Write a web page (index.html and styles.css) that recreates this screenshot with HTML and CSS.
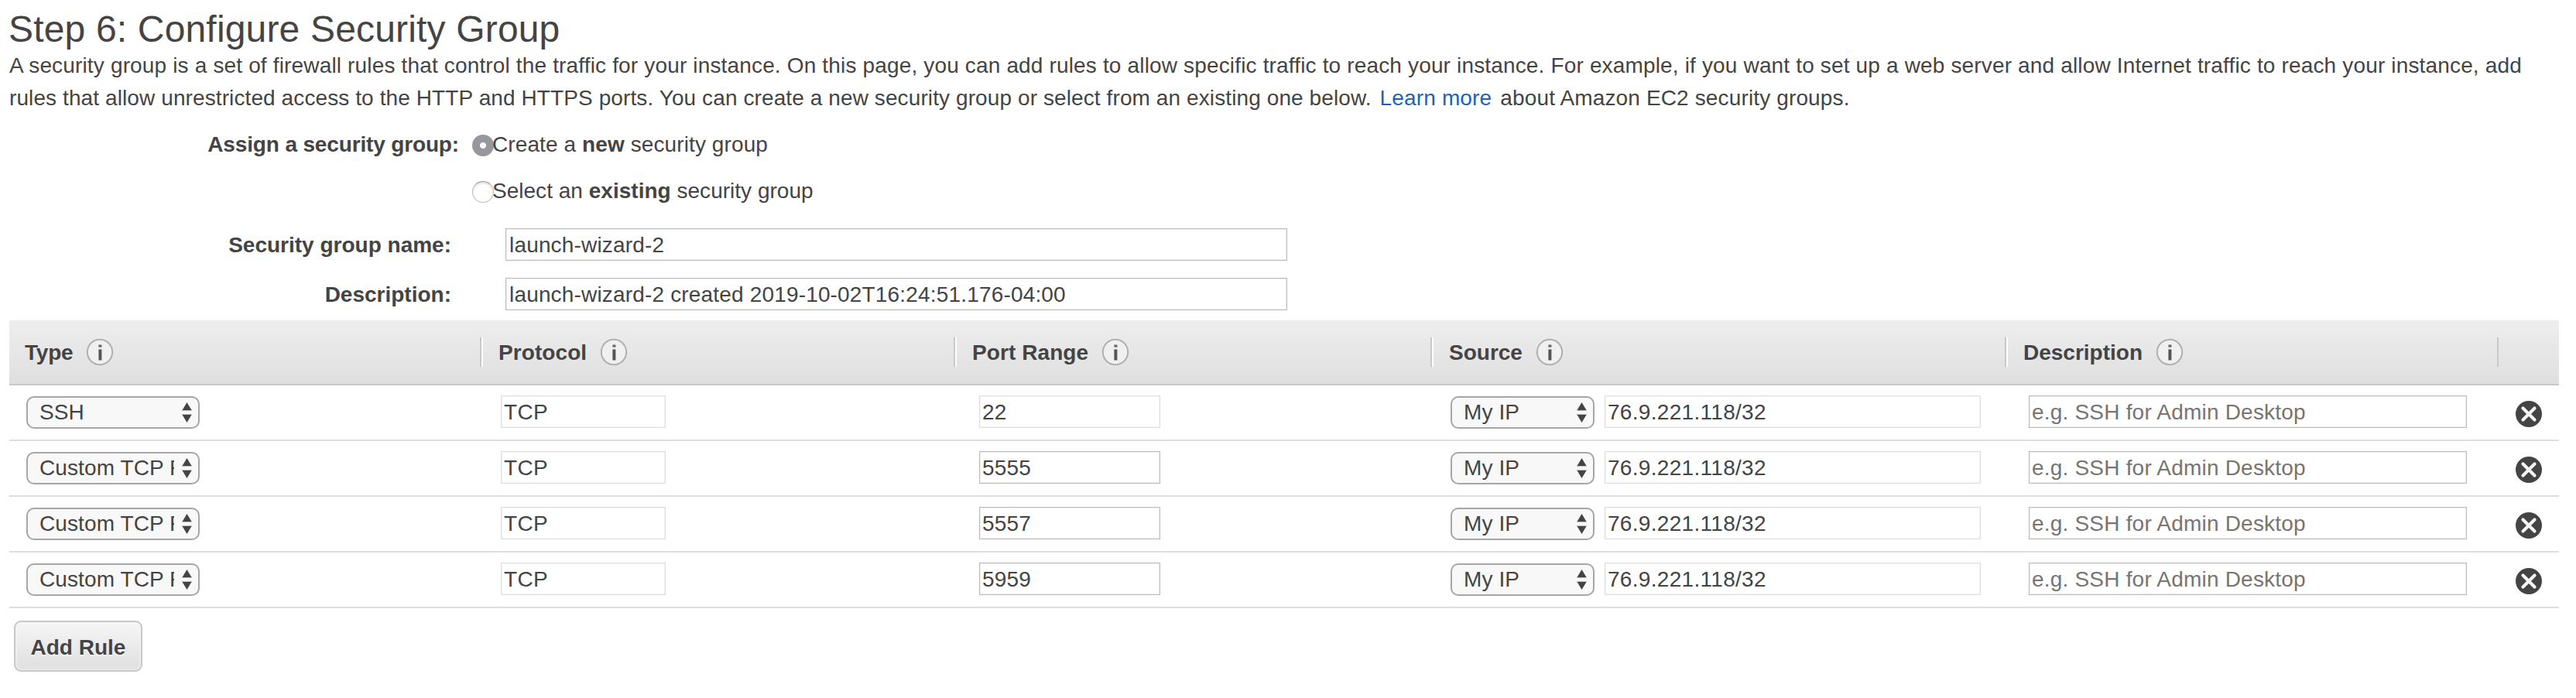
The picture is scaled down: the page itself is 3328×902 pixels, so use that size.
FILE: index.html
```html
<!DOCTYPE html>
<html lang="en">
<head>
<meta charset="utf-8">
<title>Step 6: Configure Security Group</title>
<link rel="stylesheet" href="styles.css">
</head>
<body>
<svg class="defs" width="0" height="0">
  <symbol id="info" viewBox="0 0 36 36">
    <circle cx="18" cy="18" r="16.2" fill="#f0f0f0" stroke="#b0b0b0" stroke-width="2"/>
    <rect x="16.4" y="8.5" width="4" height="3.2" fill="#666"/>
    <rect x="16.4" y="14.5" width="4" height="14" fill="#555"/>
  </symbol>
  <symbol id="remove" viewBox="0 0 36 36">
    <circle cx="18" cy="18" r="17" fill="#444"/>
    <path d="M10.5 10.5 25.5 25.5M25.5 10.5 10.5 25.5" stroke="#f4f4f4" stroke-width="4.2" stroke-linecap="round"/>
  </symbol>
  <symbol id="arrows" viewBox="0 0 13 26">
    <path d="M6.5 0 12.5 10H.5ZM.5 16h12L6.5 26Z" fill="#444"/>
    <path d="M0 10.5h13M0 15.5h13" stroke="#bbb"/>
  </symbol>
</svg>
<main class="page">
  <h1 class="title">Step 6: Configure Security Group</h1>
  <p class="intro">A security group is a set of firewall rules that control the traffic for your instance. On this page, you can add rules to allow specific traffic to reach your instance. For example, if you want to set up a web server and allow Internet traffic to reach your instance, add<br><span class="intro-second">rules that allow unrestricted access to the HTTP and HTTPS ports. You can create a new security group or select from an existing one below.</span><a class="learn">Learn more</a><span class="about">about Amazon EC2 security groups.</span></p>

  <section class="form">
    <div class="line choice">
      <div class="label assign">Assign a security group:</div>
      <span class="radio checked"></span><span class="option">Create a <b>new</b> security group</span>
    </div>
    <div class="line choice">
      <div class="label"></div>
      <span class="radio"></span><span class="option existing">Select an <b>existing</b> security group</span>
    </div>
    <div class="line field">
      <label class="label" for="name">Security group name:</label>
      <input class="input wide" id="name" value="launch-wizard-2">
    </div>
    <div class="line field">
      <label class="label" for="desc">Description:</label>
      <input class="input wide" id="desc" value="launch-wizard-2 created 2019-10-02T16:24:51.176-04:00">
    </div>
  </section>

  <section class="table">
    <div class="row head">
      <div class="th type">Type<svg class="info"><use href="#info"/></svg></div>
      <div class="th loose">Protocol<svg class="info"><use href="#info"/></svg></div>
      <div class="th loose">Port Range<svg class="info"><use href="#info"/></svg></div>
      <div class="th">Source<svg class="info"><use href="#info"/></svg></div>
      <div class="th">Description<svg class="info"><use href="#info"/></svg></div>
      <div class="th last"></div>
    </div>
    <div class="row rule">
      <div class="td td-type"><div class="select kind"><span class="value">SSH</span><svg class="arrows"><use href="#arrows"/></svg></div></div>
      <div class="td td-protocol"><input class="input protocol off" value="TCP"></div>
      <div class="td td-port"><input class="input port off" value="22"></div>
      <div class="td td-source"><div class="select source"><span class="value">My IP</span><svg class="arrows"><use href="#arrows"/></svg></div><input class="input ip off" value="76.9.221.118/32"></div>
      <div class="td td-desc"><input class="input note" placeholder="e.g. SSH for Admin Desktop"></div>
      <div class="td td-remove"><svg class="remove"><use href="#remove"/></svg></div>
    </div>
    <div class="row rule">
      <div class="td td-type"><div class="select kind"><span class="value">Custom TCP R</span><svg class="arrows"><use href="#arrows"/></svg></div></div>
      <div class="td td-protocol"><input class="input protocol off" value="TCP"></div>
      <div class="td td-port"><input class="input port" value="5555"></div>
      <div class="td td-source"><div class="select source"><span class="value">My IP</span><svg class="arrows"><use href="#arrows"/></svg></div><input class="input ip off" value="76.9.221.118/32"></div>
      <div class="td td-desc"><input class="input note" placeholder="e.g. SSH for Admin Desktop"></div>
      <div class="td td-remove"><svg class="remove"><use href="#remove"/></svg></div>
    </div>
    <div class="row rule">
      <div class="td td-type"><div class="select kind"><span class="value">Custom TCP R</span><svg class="arrows"><use href="#arrows"/></svg></div></div>
      <div class="td td-protocol"><input class="input protocol off" value="TCP"></div>
      <div class="td td-port"><input class="input port" value="5557"></div>
      <div class="td td-source"><div class="select source"><span class="value">My IP</span><svg class="arrows"><use href="#arrows"/></svg></div><input class="input ip off" value="76.9.221.118/32"></div>
      <div class="td td-desc"><input class="input note" placeholder="e.g. SSH for Admin Desktop"></div>
      <div class="td td-remove"><svg class="remove"><use href="#remove"/></svg></div>
    </div>
    <div class="row rule">
      <div class="td td-type"><div class="select kind"><span class="value">Custom TCP R</span><svg class="arrows"><use href="#arrows"/></svg></div></div>
      <div class="td td-protocol"><input class="input protocol off" value="TCP"></div>
      <div class="td td-port"><input class="input port" value="5959"></div>
      <div class="td td-source"><div class="select source"><span class="value">My IP</span><svg class="arrows"><use href="#arrows"/></svg></div><input class="input ip off" value="76.9.221.118/32"></div>
      <div class="td td-desc"><input class="input note" placeholder="e.g. SSH for Admin Desktop"></div>
      <div class="td td-remove"><svg class="remove"><use href="#remove"/></svg></div>
    </div>
  </section>
  <button class="add">Add Rule</button>
</main>
</body>
</html>
```

FILE: styles.css
```css
* { box-sizing: border-box; }
body {
  margin: 0;
  background: #fff;
  color: #444;
  font: 28px/42px "Liberation Sans", Arial, sans-serif;
}
.defs { display: block; height: 0; }
.page { padding: 11px 22px 0 12px; }
.title {
  margin: 0 0 -1px -1px;
  font-size: 48px;
  font-weight: 400;
  line-height: 54px;
  letter-spacing: 0.17px;
}
.intro { margin: 0; letter-spacing: 0.158px; white-space: nowrap; }
.intro-second { letter-spacing: 0.1px; }
.learn { margin-left: 11px; color: #1e62b8; letter-spacing: 0.15px; }
.about { margin-left: 11px; letter-spacing: 0.14px; }

.form { padding-top: 17px; }
.line { display: flex; align-items: center; height: 42px; }
.line + .line { margin-top: 18px; }
.line.field { margin-top: 28px; }
.line.field + .field { margin-top: 22px; }
.label { width: 571px; padding-top: 2px; text-align: right; font-weight: 700; }
.assign { letter-spacing: -0.15px; }
.choice .label { width: 581px; }
.radio {
  width: 28px;
  height: 28px;
  margin: 4px -2px 0 17px;
  border: 1px solid #bdbdbd;
  border-top-color: #999;
  border-radius: 50%;
  background: #fff;
  box-shadow: inset 0 2px 3px #ddd;
}
.radio.checked {
  border: 0;
  background: radial-gradient(circle, #fff 3.6px, #98979c 4.4px);
  box-shadow: none;
}
.option { position: relative; padding-top: 2px; letter-spacing: 0.1px; }
.option.existing { letter-spacing: 0.02px; }

.input {
  display: block;
  height: 42px;
  margin: 0;
  padding: 2px 3px 0;
  border: 1px solid #bbb;
  border-radius: 0;
  background: #fff;
  box-shadow: inset 0 0 0 1px #eee;
  color: #444;
  font: 28px "Liberation Sans", Arial, sans-serif;
  letter-spacing: 0.17px;
  outline: 0;
}
.input::placeholder { color: #757575; opacity: 1; letter-spacing: 0.2px; }
.input.off { border-color: #ddd; box-shadow: inset 0 0 0 1px #f4f4f4; }
.wide { width: 1010px; margin-left: 70px; padding-left: 4px; }

.table { margin-top: 13px; width: 3294px; }
.row { display: grid; grid-template-columns: 608px 612px 616px 742px 636px 80px; }
.head {
  height: 84px;
  border-bottom: 2px solid #c8c8c8;
  background: linear-gradient(#eee, #dfdfdf);
}
.th {
  display: flex;
  align-items: center;
  height: 38px;
  margin-top: 22px;
  padding: 2px 0 0 22px;
  border-left: 2px solid #c8c8c8;
  box-shadow: inset 2px 0 #fff;
  font-weight: 700;
}
.th.type { border: 0; box-shadow: none; padding-left: 20px; letter-spacing: -0.2px; }
.th.loose { letter-spacing: 0.08px; }
.th.last { box-shadow: none; }
.info { width: 36px; height: 36px; margin: -2px 0 0 17px; }
.rule { height: 72px; border-bottom: 2px solid #ddd; }
.td { display: flex; padding-top: 13px; }
.td-type { padding-left: 22px; }
.td-protocol { padding-left: 27px; }
.td-port { padding-left: 33px; }
.td-source { padding-left: 26px; gap: 13px; }
.td-desc { padding-left: 31px; }
.td-remove { padding: 19px 0 0 23px; }
.protocol { width: 213px; }
.protocol, .ip { letter-spacing: 0.3px; }
.port { width: 234px; }
.ip { width: 486px; }
.note { width: 566px; }
.remove { width: 36px; height: 36px; }
.select {
  display: flex;
  justify-content: space-between;
  height: 42px;
  margin-top: 1px;
  padding: 0 8px 0 15px;
  border: 2px solid #a6a6a6;
  border-radius: 10px;
  background: #f8f8f8;
}
.select.kind { width: 224px; }
.select.source { width: 186px; }
.value {
  width: 174px;
  overflow: hidden;
  white-space: nowrap;
  line-height: 38px;
  height: 38px;
  letter-spacing: 0.1px;
}
.source .value { width: 130px; }
.arrows { flex: none; width: 13px; height: 26px; margin-top: 6px; }

.add {
  display: block;
  width: 166px;
  height: 66px;
  margin: 16px 0 0 6px;
  padding: 3px 0 0;
  border: 2px solid #c8c8c8;
  border-radius: 9px;
  background: linear-gradient(#f6f6f6, #dfdfdf);
  box-shadow: inset 0 0 3px 1px #f4f4f4;
  color: #444;
  font: 700 28px "Liberation Sans", Arial, sans-serif;
  text-shadow: 0 2px #fff;
}
```
